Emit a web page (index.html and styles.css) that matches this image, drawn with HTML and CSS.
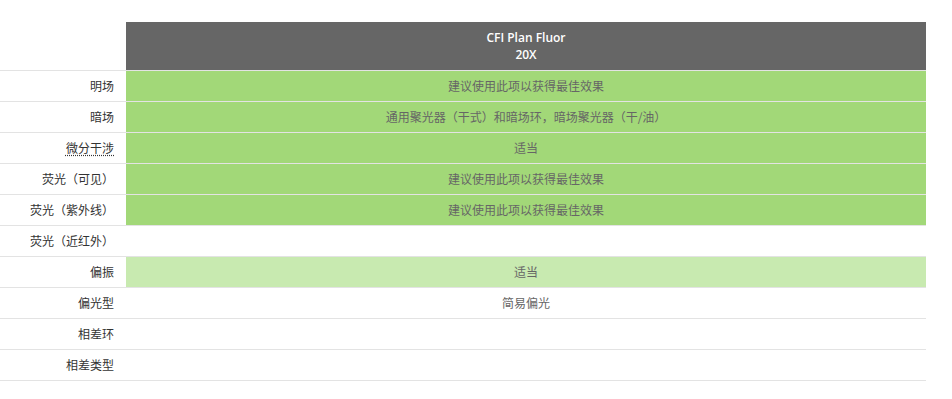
FILE: index.html
```html
<!DOCTYPE html>
<html lang="zh">
<head>
<meta charset="utf-8">
<link rel="stylesheet" href="styles.css">
</head>
<body>
<table class="spec">
  <thead>
    <tr>
      <th class="corner"></th>
      <th class="model">CFI Plan Fluor<br>20X</th>
    </tr>
  </thead>
  <tbody>
    <tr><td class="label">明场</td><td class="val good">建议使用此项以获得最佳效果</td></tr>
    <tr><td class="label">暗场</td><td class="val good">通用聚光器（干式）和暗场环，暗场聚光器（干/油）</td></tr>
    <tr><td class="label"><abbr class="term">微分干涉</abbr></td><td class="val good">适当</td></tr>
    <tr><td class="label">荧光（可见）</td><td class="val good">建议使用此项以获得最佳效果</td></tr>
    <tr><td class="label">荧光（紫外线）</td><td class="val good">建议使用此项以获得最佳效果</td></tr>
    <tr><td class="label">荧光（近红外）</td><td class="val"></td></tr>
    <tr><td class="label">偏振</td><td class="val ok">适当</td></tr>
    <tr><td class="label">偏光型</td><td class="val">简易偏光</td></tr>
    <tr><td class="label">相差环</td><td class="val"></td></tr>
    <tr><td class="label">相差类型</td><td class="val"></td></tr>
  </tbody>
</table>
</body>
</html>
```

FILE: styles.css
```css
html, body {
  margin: 0;
  padding: 0;
  background: #ffffff;
}

body {
  font-family: "Open Sans", "Noto Sans CJK SC", sans-serif;
  font-size: 12px;
  color: #333333;
}

.spec {
  margin-top: 22px;
  width: 926px;
  border-collapse: collapse;
  table-layout: fixed;
}

.spec th,
.spec td {
  padding: 0;
}

.corner {
  width: 126px;
  background: #ffffff;
}

.model {
  background: #666666;
  color: #ffffff;
  font-weight: 600;
  font-size: 12px;
  line-height: 17px;
  height: 48px;
  text-align: center;
  vertical-align: middle;
  box-sizing: border-box;
  padding: 6px 0 7px;
}

.spec tbody tr {
  border-top: 1px solid #e3e3e3;
}

.spec tbody tr:last-child {
  border-bottom: 1px solid #e3e3e3;
}

.spec tbody td {
  height: 30px;
  line-height: 16px;
  vertical-align: middle;
}

.label {
  text-align: right;
  padding-right: 12px !important;
  color: #333333;
  font-family: "Noto Sans CJK SC", sans-serif;
}

.term {
  text-decoration: underline dotted;
  text-underline-offset: 2px;
  border: 0;
}

.val {
  text-align: center;
  color: #666666;
  font-family: "Noto Sans CJK SC", sans-serif;
}

.good {
  background: #a2d878;
}

.ok {
  background: #c8eab0;
}
```
